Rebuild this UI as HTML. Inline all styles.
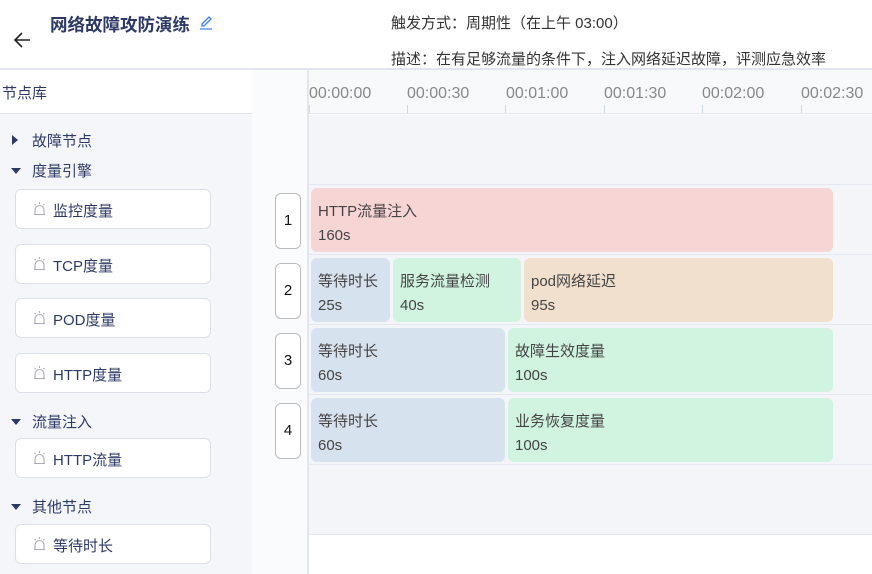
<!DOCTYPE html>
<html><head><meta charset="utf-8"><style>
*{margin:0;padding:0;box-sizing:border-box}
body{width:872px;height:574px;overflow:hidden;background:#fff;font-family:"Liberation Sans","Noto Sans CJK SC",sans-serif;position:relative;color:#333}
.a{position:absolute}
.title{left:50px;top:12px;font-size:17.5px;font-weight:bold;color:#2d3a66}
.info{font-size:15px;color:#333}
.side{left:0;top:70px;width:252px;height:504px;background:#f5f6fa}
.sh{left:0;top:70px;width:252px;height:44px;background:#fff;border-bottom:1px solid #dfe2ec;font-size:15px;color:#2d3a66;padding:12px 2px}
.grp{font-size:15px;color:#2d3a66;left:32px}
.tri{left:11px;width:0;height:0}
.tr{border-left:5px solid transparent;border-right:5px solid transparent;border-top:6px solid #2d3a66}
.tl{border-top:5px solid transparent;border-bottom:5px solid transparent;border-left:6px solid #2d3a66}
.card{left:15px;width:196px;height:40px;background:#fff;border:1px solid #dcdfe8;border-radius:6px;font-size:15px;color:#2d3a66;padding:10px 0 0 37px}
.ic{position:absolute;left:17px;top:12px;width:13px;height:14px}
.num{left:275px;width:26px;height:56px;background:#fff;border:1px solid #bbb;border-radius:6px;font-size:15px;color:#111;text-align:center;line-height:54px}
.blk{border-radius:6px;font-size:15px;color:#444;padding:12px 0 0 7px;line-height:24px;height:64px}
.tk{top:85px;font-size:16px;color:#888}
.tick{top:105px;width:1px;height:8px;background:#ccd6e6}
.row{left:309px;width:563px;height:1px;background:#e3e7ef}
</style></head><body>
<svg class="a" style="left:13px;top:31px" width="20" height="18" viewBox="0 0 20 18"><path d="M17 9H3M9 2L2 9l7 7" fill="none" stroke="#222" stroke-width="1.6"/></svg>
<div class="a title">网络故障攻防演练</div>
<svg class="a" style="left:199px;top:14px" width="14" height="16" viewBox="0 0 14 16"><path d="M3 10L10 3l2 2-7 7H3z" fill="none" stroke="#3a7ef2" stroke-width="1.3"/><path d="M1 15h12" stroke="#3a7ef2" stroke-width="1.2"/></svg>
<div class="a info" style="left:391px;top:12px">触发方式：周期性（在上午 03:00）</div>
<div class="a info" style="left:391px;top:48px">描述：在有足够流量的条件下，注入网络延迟故障，评测应急效率</div>
<div class="a" style="left:0;top:68px;width:872px;height:2px;background:#e3e5ee"></div>
<div class="a side"></div>
<div class="a sh">节点库</div>
<div class="a tri tl" style="top:135px;left:12px"></div><div class="a grp" style="top:130px">故障节点</div>
<div class="a tri tr" style="top:168px"></div><div class="a grp" style="top:160px">度量引擎</div>
<div class="a tri tr" style="top:419px"></div><div class="a grp" style="top:411px">流量注入</div>
<div class="a tri tr" style="top:504px"></div><div class="a grp" style="top:496px">其他节点</div>
<div class="a card" style="top:189px"><svg class="ic" viewBox="0 0 13 14"><path d="M2 12V8a4.5 4.5 0 0 1 9 0v4M1 12.5h11M6.5 0v2M1.5 2l1.2 1.2M11.5 2l-1.2 1.2" fill="none" stroke="#aab" stroke-width="1.1"/></svg>监控度量</div>
<div class="a card" style="top:244px"><svg class="ic" viewBox="0 0 13 14"><path d="M2 12V8a4.5 4.5 0 0 1 9 0v4M1 12.5h11M6.5 0v2M1.5 2l1.2 1.2M11.5 2l-1.2 1.2" fill="none" stroke="#aab" stroke-width="1.1"/></svg>TCP度量</div>
<div class="a card" style="top:298px"><svg class="ic" viewBox="0 0 13 14"><path d="M2 12V8a4.5 4.5 0 0 1 9 0v4M1 12.5h11M6.5 0v2M1.5 2l1.2 1.2M11.5 2l-1.2 1.2" fill="none" stroke="#aab" stroke-width="1.1"/></svg>POD度量</div>
<div class="a card" style="top:353px"><svg class="ic" viewBox="0 0 13 14"><path d="M2 12V8a4.5 4.5 0 0 1 9 0v4M1 12.5h11M6.5 0v2M1.5 2l1.2 1.2M11.5 2l-1.2 1.2" fill="none" stroke="#aab" stroke-width="1.1"/></svg>HTTP度量</div>
<div class="a card" style="top:438px"><svg class="ic" viewBox="0 0 13 14"><path d="M2 12V8a4.5 4.5 0 0 1 9 0v4M1 12.5h11M6.5 0v2M1.5 2l1.2 1.2M11.5 2l-1.2 1.2" fill="none" stroke="#aab" stroke-width="1.1"/></svg>HTTP流量</div>
<div class="a card" style="top:524px"><svg class="ic" viewBox="0 0 13 14"><path d="M2 12V8a4.5 4.5 0 0 1 9 0v4M1 12.5h11M6.5 0v2M1.5 2l1.2 1.2M11.5 2l-1.2 1.2" fill="none" stroke="#aab" stroke-width="1.1"/></svg>等待时长</div>
<div class="a" style="left:252px;top:70px;width:56px;height:504px;background:#fafbfc"></div>
<div class="a" style="left:307px;top:70px;width:2px;height:504px;background:#e3e6ee"></div>
<div class="a" style="left:309px;top:70px;width:563px;height:44px;background:#f8f9fb;border-bottom:1px solid #e3e7ef"></div>
<div class="a" style="left:309px;top:115px;width:563px;height:419px;background:#f4f5f8"></div>
<div class="a" style="left:309px;top:534px;width:563px;height:1px;background:#e3e7ef"></div>
<div class="a tk" style="left:309px">00:00:00</div><div class="a tk" style="left:407px">00:00:30</div><div class="a tk" style="left:506px">00:01:00</div><div class="a tk" style="left:604px">00:01:30</div><div class="a tk" style="left:702px">00:02:00</div><div class="a tk" style="left:801px">00:02:30</div>
<div class="a tick" style="left:309px"></div><div class="a tick" style="left:407px"></div><div class="a tick" style="left:505px"></div><div class="a tick" style="left:604px"></div><div class="a tick" style="left:702px"></div><div class="a tick" style="left:801px"></div>
<div class="a row" style="top:184px"></div><div class="a row" style="top:254px"></div><div class="a row" style="top:324px"></div><div class="a row" style="top:394px"></div><div class="a row" style="top:464px"></div>
<div class="a num" style="top:193px">1</div><div class="a num" style="top:263px">2</div><div class="a num" style="top:333px">3</div><div class="a num" style="top:403px">4</div>
<div class="a blk" style="left:311px;top:188px;width:522px;background:#f8d5d5">HTTP流量注入<br>160s</div>
<div class="a blk" style="left:311px;top:258px;width:79px;background:#d7e2ef">等待时长<br>25s</div>
<div class="a blk" style="left:393px;top:258px;width:128px;background:#d0f4e0">服务流量检测<br>40s</div>
<div class="a blk" style="left:524px;top:258px;width:309px;background:#f2e0ce">pod网络延迟<br>95s</div>
<div class="a blk" style="left:311px;top:328px;width:194px;background:#d7e2ef">等待时长<br>60s</div>
<div class="a blk" style="left:508px;top:328px;width:325px;background:#d0f4e0">故障生效度量<br>100s</div>
<div class="a blk" style="left:311px;top:398px;width:194px;background:#d7e2ef">等待时长<br>60s</div>
<div class="a blk" style="left:508px;top:398px;width:325px;background:#d0f4e0">业务恢复度量<br>100s</div>
</body></html>
